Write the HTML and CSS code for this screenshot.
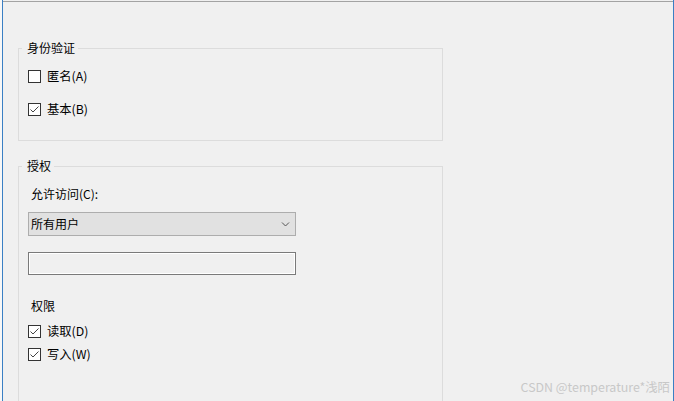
FILE: index.html
```html
<!DOCTYPE html>
<html lang="zh-CN">
<head>
<meta charset="utf-8">
<title>身份验证</title>
<link rel="stylesheet" href="styles.css">
</head>
<body>
<div class="screen">
  <div class="edge-strip"></div>
  <div class="edge-blue"></div>
  <div class="main">
    <fieldset class="group group-auth">
      <legend class="group-title">身份验证</legend>
      <label class="check-row">
        <span class="box"></span>
        <span class="check-text">匿名(A)</span>
      </label>
      <label class="check-row second">
        <span class="box checked"><svg viewBox="0 0 11 11" width="11" height="11"><path d="M1.5 5.5 L4 8 L9.5 2.5" fill="none" stroke="#444" stroke-width="1"/></svg></span>
        <span class="check-text">基本(B)</span>
      </label>
    </fieldset>

    <fieldset class="group group-perm">
      <legend class="group-title">授权</legend>
      <div class="label">允许访问(C):</div>
      <div class="combo">
        <span class="combo-text">所有用户</span>
        <svg class="chevron" viewBox="0 0 9 5" width="9" height="5"><path d="M1 0.5 L4.5 4 L8 0.5" fill="none" stroke="#555" stroke-width="1"/></svg>
      </div>
      <div class="textbox"></div>
      <div class="label perm-label">权限</div>
      <label class="check-row read">
        <span class="box checked"><svg viewBox="0 0 11 11" width="11" height="11"><path d="M1.5 5.5 L4 8 L9.5 2.5" fill="none" stroke="#444" stroke-width="1"/></svg></span>
        <span class="check-text">读取(D)</span>
      </label>
      <label class="check-row write">
        <span class="box checked"><svg viewBox="0 0 11 11" width="11" height="11"><path d="M1.5 5.5 L4 8 L9.5 2.5" fill="none" stroke="#444" stroke-width="1"/></svg></span>
        <span class="check-text">写入(W)</span>
      </label>
    </fieldset>
  </div>
  <div class="edge-blue"></div>
  <div class="watermark">CSDN @temperature*浅陌</div>
</div>
</body>
</html>
```

FILE: styles.css
```css
* { box-sizing: border-box; }
html, body { margin: 0; padding: 0; }
body {
  background: #f0f0f0;
  font-family: "Noto Sans CJK SC", "Noto Sans", sans-serif;
  font-size: 12px;
  color: #000;
}
.screen {
  position: relative;
  width: 674px;
  height: 401px;
  overflow: hidden;
  display: flex;
  background: #f0f0f0;
}
.edge-strip {
  width: 2px;
  background: #f7f7f7;
}
.edge-blue {
  width: 1px;
  background: #3a7fc4;
}
.main {
  flex: 1;
  margin-top: 1px;
  border-top: 1px solid #a3a3a3;
  padding-left: 15px;
  display: flex;
  flex-direction: column;
}
.group {
  margin: 0;
  width: 425px;
  border: 1px solid #dcdcdc;
  padding: 0 0 0 9px;
  min-width: 0;
}
.group-title {
  font-size: 12px;
  line-height: 16px;
  height: 16px;
  padding: 0 3px 0 5px;
  margin-left: -6px;
}
.group-auth {
  margin-top: 38px;
  padding-top: 10px;
  padding-bottom: 21px;
}
.group-perm {
  margin-top: 17px;
  padding-top: 12px;
  flex: 1;
  margin-bottom: -20px;
}
.check-row {
  display: flex;
  align-items: center;
  height: 20px;
}
.check-row.second { margin-top: 13px; }
.check-row.read { margin-top: 7px; }
.check-row.write { margin-top: 3px; }
.box {
  width: 13px;
  height: 13px;
  border: 1px solid #333;
  background: #fff;
  display: flex;
  align-items: center;
  justify-content: center;
  flex: none;
}
.check-text {
  margin-left: 6px;
  line-height: 16px;
  font-size: 12.3px;
}
.label {
  line-height: 16px;
  height: 16px;
  margin-left: 3px;
}
.combo {
  margin-top: 10px;
  width: 268px;
  height: 24px;
  border: 1px solid #adadad;
  background: #e1e1e1;
  display: flex;
  align-items: center;
  justify-content: space-between;
  padding: 0 5px 0 2px;
}
.combo-text { line-height: 16px; }
.chevron { display: block; }
.textbox {
  margin-top: 16px;
  width: 268px;
  height: 23px;
  border: 1px solid #7a7a7a;
  box-shadow: inset 0 0 0 1px #ffffff;
  background: #f0f0f0;
}
.perm-label { margin-top: 23px; }
.watermark {
  position: absolute;
  right: 4px;
  bottom: 7px;
  font-size: 12.4px;
  line-height: 14px;
  color: #c8c8c8;
  white-space: nowrap;
}
```
